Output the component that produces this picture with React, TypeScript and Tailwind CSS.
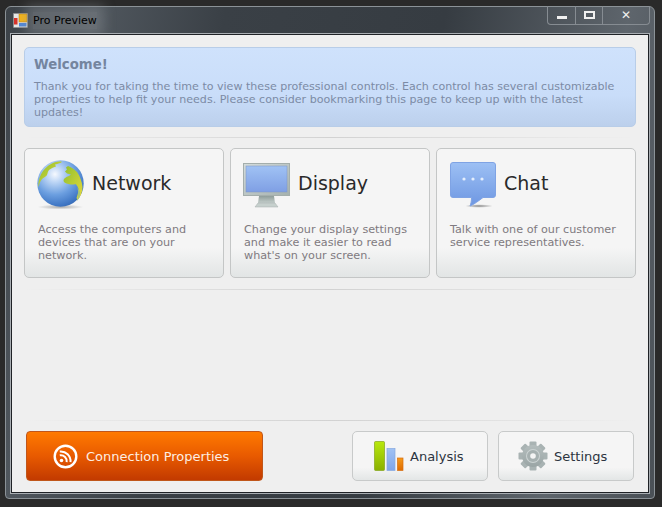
const FONT = "font-['DejaVu_Sans',Verdana,sans-serif]";

function Globe() {
  return (
    <svg width="48" height="50" viewBox="0 0 48 50">
      <defs>
        <radialGradient id="globeSea" cx="0.38" cy="0.3" r="0.8">
          <stop offset="0" stopColor="#f6f9fe" />
          <stop offset="0.22" stopColor="#bcd5f5" />
          <stop offset="0.55" stopColor="#6c9fe0" />
          <stop offset="0.85" stopColor="#3f76c4" />
          <stop offset="1" stopColor="#2f62ab" />
        </radialGradient>
        <linearGradient id="globeLand" x1="0" y1="0" x2="1" y2="1">
          <stop offset="0" stopColor="#8fc02e" />
          <stop offset="1" stopColor="#e6d93c" />
        </linearGradient>
        <radialGradient id="globeShadow">
          <stop offset="0" stopColor="#aaa" />
          <stop offset="1" stopColor="#aaa" stopOpacity="0" />
        </radialGradient>
      </defs>
      <ellipse cx="23.500" cy="47" rx="23" ry="2.500" fill="url(#globeShadow)" />
      <circle cx="23.500" cy="23.500" r="23.200" fill="url(#globeSea)" />
      <path d="M1.300 25C1.500 20 3 15 6 11c3-4 7-7 11-8.500 3-1 6-1.200 8-.8-1 1.500-4 1.800-7 2.800l1 2c-3 1-5 2-7 3.500-2 2.500-1 5-3.500 6.500-2 1.500-3.500 2-4.500 4-.8 1-1.500 3-2.700 6.500z" fill="url(#globeLand)" />
      <path d="M31 6c3 1 6 3 9 6 3 4 5 10 5.500 15 0 5-2 10-5 13l-1-2c1-3 2-6 2-9-1-3-2-4-3-5-2 1-5 .5-7 0-3-.5-5-1.500-5-3.500 0-2 2.500-3.500 5.500-4.500l2-1.500-4-1-2-2 2-2-1-2z" fill="url(#globeLand)" />
      <path d="M40 27c1 2 3 4 3 6 0 3-1 6-3 8 1-4 2-9 0-14z" fill="#a2c480" />
    </svg>
  );
}

function Monitor() {
  return (
    <svg width="48" height="46" viewBox="0 0 48 46">
      <defs>
        <linearGradient id="monFrame" x1="0" y1="0" x2="1" y2="1">
          <stop offset="0" stopColor="#d4dcdc" />
          <stop offset="1" stopColor="#a5b1ae" />
        </linearGradient>
        <linearGradient id="monScreen" x1="0" y1="0" x2="0" y2="1">
          <stop offset="0" stopColor="#a0c2f4" />
          <stop offset="1" stopColor="#7f9fe4" />
        </linearGradient>
        <linearGradient id="monNeck" x1="0" y1="0" x2="0" y2="1">
          <stop offset="0" stopColor="#8f9d9a" />
          <stop offset="1" stopColor="#c3cdca" />
        </linearGradient>
      </defs>
      <rect x="0.500" y="0.500" width="46" height="32" fill="url(#monFrame)" stroke="#a4aeac" />
      <rect x="3" y="3" width="41" height="26" fill="url(#monScreen)" stroke="#7d95c4" strokeWidth="0.500" />
      <path d="M16 33h15l1 7H15z" fill="url(#monNeck)" />
      <path d="M12 44l3-4h17l3 4z" fill="#c6d0cd" stroke="#a4aeac" strokeWidth="0.500" />
    </svg>
  );
}

function Bubble() {
  return (
    <svg width="46" height="46" viewBox="0 0 46 46">
      <defs>
        <linearGradient id="bubbleFill" x1="0" y1="0" x2="0" y2="1">
          <stop offset="0" stopColor="#9dc0f4" />
          <stop offset="1" stopColor="#6e97e2" />
        </linearGradient>
        <radialGradient id="bubbleShadow">
          <stop offset="0" stopColor="#888" />
          <stop offset="1" stopColor="#888" stopOpacity="0" />
        </radialGradient>
      </defs>
      <ellipse cx="29" cy="44" rx="14" ry="1.800" fill="url(#bubbleShadow)" />
      <path d="M3 .5h40a2.500 2.500 0 0 1 2.500 2.500v30a2.500 2.500 0 0 1-2.500 2.500H33c-4 3-9 7-13 8.500 1-2.500 1.500-5 1.500-8.500H3A2.500 2.500 0 0 1 .5 33V3A2.500 2.500 0 0 1 3 .5z" fill="url(#bubbleFill)" stroke="#7fa3e4" />
      <circle cx="14" cy="17" r="1.600" fill="#e4eefc" />
      <circle cx="23" cy="17" r="1.600" fill="#e4eefc" />
      <circle cx="32" cy="17" r="1.600" fill="#e4eefc" />
    </svg>
  );
}

function Bars() {
  return (
    <svg width="30" height="31" viewBox="0 0 30 31">
      <defs>
        <linearGradient id="barGreen" x1="0" y1="0" x2="0" y2="1">
          <stop offset="0" stopColor="#b8e80c" />
          <stop offset="1" stopColor="#8ab000" />
        </linearGradient>
        <linearGradient id="barBlue" x1="0" y1="0" x2="0" y2="1">
          <stop offset="0" stopColor="#a0c2f4" />
          <stop offset="1" stopColor="#7fa5ea" />
        </linearGradient>
        <linearGradient id="barOrange" x1="0" y1="0" x2="0" y2="1">
          <stop offset="0" stopColor="#f59a1a" />
          <stop offset="1" stopColor="#de6a00" />
        </linearGradient>
      </defs>
      <rect x="0.500" y="0.500" width="10" height="29" rx="1" fill="url(#barGreen)" stroke="#84a51a" strokeWidth="0.700" />
      <rect x="13" y="7.500" width="8" height="22" fill="url(#barBlue)" stroke="#86a8e0" strokeWidth="0.700" />
      <rect x="23.500" y="17" width="5.500" height="12.500" fill="url(#barOrange)" stroke="#d66d10" strokeWidth="0.700" />
    </svg>
  );
}

function Gear() {
  const teeth = [0, 45, 90, 135, 180, 225, 270, 315];
  return (
    <svg width="30" height="30" viewBox="0 0 30 30">
      <defs>
        <linearGradient id="gearFill" x1="0" y1="0" x2="0" y2="1">
          <stop offset="0" stopColor="#b4bdbd" />
          <stop offset="1" stopColor="#9aa5a5" />
        </linearGradient>
      </defs>
      {teeth.map((a) => (
        <rect key={a} x="11.500" y="0.500" width="7" height="7" rx="1" fill="#a9b3b3" transform={`rotate(${a} 15 15)`} />
      ))}
      <circle cx="15" cy="15" r="11" fill="url(#gearFill)" />
      <circle cx="15" cy="15" r="7" fill="#ccd3d3" />
      <circle cx="15" cy="15" r="6" fill="#a6b0b0" />
      <circle cx="15" cy="15" r="2.800" fill="#f4f4f4" />
    </svg>
  );
}

function Rss() {
  return (
    <svg width="25" height="25" viewBox="0 0 25 25" fill="none">
      <circle cx="12.500" cy="12.500" r="10.800" stroke="#fff" strokeWidth="2.400" />
      <circle cx="8.500" cy="16.500" r="1.800" fill="#fff" />
      <path d="M6.800 11.300a6 6 0 0 1 6.900 6.900" stroke="#fff" strokeWidth="2" />
      <path d="M6.800 7.500a9.800 9.800 0 0 1 10.700 10.700" stroke="#fff" strokeWidth="2" />
    </svg>
  );
}

function AppIcon() {
  return (
    <svg width="15" height="15" viewBox="0 0 15 15">
      <rect x="0.500" y="0.500" width="14" height="14" fill="#e7e7e7" stroke="#8b8b8b" strokeWidth="0.500" />
      <rect x="6" y="1" width="8" height="8" fill="#f7b516" stroke="#b97f10" strokeWidth="0.500" />
      <rect x="1" y="5" width="3.500" height="6.500" fill="#d7332a" />
      <rect x="6" y="10" width="7.500" height="3.500" fill="#4f86d8" />
    </svg>
  );
}

function Divider() {
  return <div className="h-px bg-gradient-to-r from-transparent via-[#d2d2d2] to-transparent" />;
}

const CARDS = [
  { title: "Network", icon: <Globe />, text: ["Access the computers and", "devices that are on your", "network."], iconBox: "w-[48px] mt-[11px] ml-[12px]", gap: "ml-[7px]" },
  { title: "Display", icon: <Monitor />, text: ["Change your display settings", "and make it easier to read", "what's on your screen."], iconBox: "w-[48px] mt-[14px] ml-[12px]", gap: "ml-[7px]" },
  { title: "Chat", icon: <Bubble />, text: ["Talk with one of our customer", "service representatives."], iconBox: "w-[46px] mt-[13px] ml-[13px]", gap: "ml-[8px]" },
];

function Card({ card }: { card: (typeof CARDS)[number] }) {
  return (
    <div className="relative h-[130px] w-[200px] rounded-[5px] border border-[#c4c6c6] bg-[linear-gradient(to_bottom,#f5f5f5_0%,#f5f5f5_77%,#e2e5e5_100%)]">
      <div className="flex h-[66px] items-start">
        <div className={`${card.iconBox} shrink-0`}>{card.icon}</div>
        <div className={`${card.gap} mt-[20px] text-[19px] leading-[28px] text-[#2a2a2a]`}>{card.title}</div>
      </div>
      <div className="ml-[13px] mt-[8px] text-[11.200px] leading-[13px] text-[#7f7a80]">
        {card.text.map((l) => (
          <div key={l} className="whitespace-nowrap">{l}</div>
        ))}
      </div>
    </div>
  );
}

function GrayButton({ icon, label, inset }: { icon: React.ReactNode; label: string; inset: string }) {
  return (
    <div className={`flex h-[50px] w-[136px] items-center gap-[6px] rounded-[5px] border border-[#c8caca] bg-[linear-gradient(to_bottom,#f5f5f5_0%,#f5f5f5_74%,#e3e6e6_100%)] ${inset} text-[13px] text-[#2c3440]`}>
      {icon}
      <span className="mt-[1px]">{label}</span>
    </div>
  );
}

export default function App() {
  return (
    <div className={`${FONT} h-[507px] w-[662px] overflow-hidden bg-[#2a2a2a] pl-[5px] pt-[6px]`}>
      {/* window frame */}
      <div className="flex h-[493px] w-[650px] flex-col rounded-t-[6px] rounded-b-[4px] border border-[#8b9297] bg-[linear-gradient(100deg,#3c4248_0%,#50575e_12%,#3a4046_30%,#363c42_60%,#5e656c_85%,#4a5056_100%)] px-[5px] pb-[5px]">
        {/* title bar */}
        <div className="flex h-[27px] shrink-0 items-start">
          <div className="ml-[2px] mt-[6px]"><AppIcon /></div>
          <div className="ml-[5px] mt-[5px] bg-[#8b9197]/40 text-[11px] leading-[17px] text-black shadow-[0_0_12px_7px_rgba(139,145,151,0.4)]">Pro Preview</div>
          <div className="ml-auto mr-[-1px] mt-[-1px] flex h-[19px] w-[103px] rounded-b-[4px] border border-t-0 border-[#868c92] text-white">
            <div className="flex w-[28px] items-end justify-center border-r border-[#868c92] pb-[5px]">
              <div className="h-[3px] w-[10px] bg-[#f0f0f0]" />
            </div>
            <div className="flex w-[27px] items-center justify-center border-r border-[#868c92]">
              <div className="h-[8px] w-[11px] border-2 border-[#f0f0f0]" />
            </div>
            <div className="flex flex-1 items-center justify-center text-[12px] font-bold leading-none text-[#f0f0f0]">✕</div>
          </div>
        </div>
        {/* client area */}
        <div className="flex h-[460px] flex-col border border-[#1f2226] bg-[#efefef] px-[12px] outline outline-1 outline-[#a8adb2]">
          <div className="mt-[12px] h-[80px] rounded-[5px] border border-[#b8cde8] bg-[linear-gradient(to_bottom,#cfe2fc_0%,#c9ddf9_60%,#bcd0ec_100%)] px-[9px] pt-[8px]">
            <div className="text-[13.300px] font-bold leading-[17px] text-[#74859f]">Welcome!</div>
            <div className="mt-[7px] text-[11.070px] leading-[13px] text-[#7c8ba5]">
              <div className="whitespace-nowrap">Thank you for taking the time to view these professional controls. Each control has several customizable</div>
              <div className="whitespace-nowrap">properties to help fit your needs. Please consider bookmarking this page to keep up with the latest</div>
              <div className="whitespace-nowrap">updates!</div>
            </div>
          </div>
          <div className="mt-[10px]"><Divider /></div>
          <div className="mt-[10px] flex gap-[6px]">
            {CARDS.map((c) => (
              <Card key={c.title} card={c} />
            ))}
          </div>
          <div className="mt-[11px]"><Divider /></div>
          <div className="mt-[130px]"><Divider /></div>
          <div className="mt-[10px] flex px-[2px]">
            <div className="flex h-[50px] w-[237px] items-center gap-[8px] rounded-[4px] border border-[#c0561a] bg-[linear-gradient(to_bottom,#ff7a00_0%,#e85a00_50%,#c23a00_100%)] pl-[26px] text-[13px] text-[#fdeee2]">
              <Rss />
              <span className="mt-[1px]">Connection Properties</span>
            </div>
            <div className="ml-auto flex gap-[10px]">
              <GrayButton icon={<Bars />} label="Analysis" inset="pl-[21px]" />
              <GrayButton icon={<Gear />} label="Settings" inset="pl-[19px]" />
            </div>
          </div>
        </div>
      </div>
    </div>
  );
}
